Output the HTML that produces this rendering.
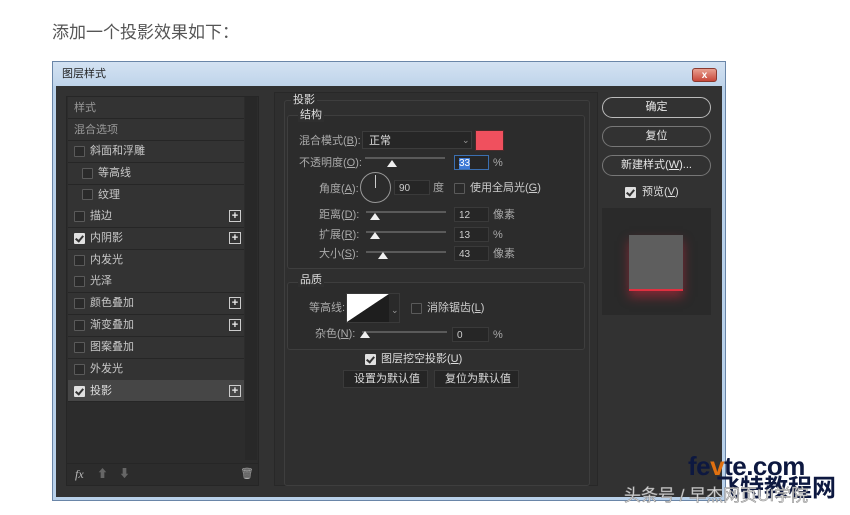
<!DOCTYPE html><html><head><meta charset="utf-8"><style>
body{margin:0;width:850px;height:515px;background:#fff;position:relative;overflow:hidden;font-family:"Liberation Sans","Noto Sans CJK SC",sans-serif;}
.a{position:absolute}
.t{position:absolute;font-size:11px;color:#c8c8c8;white-space:nowrap;line-height:13px}
.row{position:absolute;left:68px;width:176px;height:21px;border-bottom:1px solid #262626;background:#333}
.cb{position:absolute;width:9px;height:9px;border:1px solid #5a5a5a;background:#2a2a2a;border-radius:1px}
.cbk{background:#e0e0e0;border-color:#e0e0e0}
.cbk:after{content:"";position:absolute;left:2px;top:0px;width:3px;height:6px;border:solid #333;border-width:0 2px 2px 0;transform:rotate(40deg)}
.plus{position:absolute;left:229px;width:10px;height:10px;border:1px solid #ccc;color:#eee;font-size:11px;line-height:10px;text-align:center;font-weight:bold}
.sl{position:absolute;height:2px;background:#5a5a5a}
.th{position:absolute;width:0;height:0;border-left:5px solid transparent;border-right:5px solid transparent;border-bottom:7px solid #f0f0f0}
.in{position:absolute;height:15px;background:#262626;border:1px solid #3a3a3a;color:#ccc;font-size:10px;line-height:15px;padding-left:4px;box-sizing:border-box}
.btn{position:absolute;left:602px;width:109px;height:21px;border:1.5px solid #9a9a9a;border-radius:11px;box-sizing:border-box;color:#e8e8e8;font-size:11px;text-align:center;line-height:18px}
</style></head><body>
<div class="t" style="left:52px;top:23px;font-size:17px;color:#555;line-height:20px">添加一个投影效果如下：</div>
<div class="a" style="left:52px;top:61px;width:674px;height:440px;background:#b9d1ea;border:1px solid #6a86a8;box-sizing:border-box"></div>
<div class="a" style="left:53px;top:62px;width:672px;height:24px;background:linear-gradient(#d3e2f2,#bfd4ea)"></div>
<div class="t" style="left:62px;top:68px;color:#222;font-size:11px">图层样式</div>
<div class="a" style="left:692px;top:68px;width:25px;height:14px;background:linear-gradient(#e8a090,#c8483a);border:1px solid #8a3a30;border-radius:3px;color:#fff;font-size:10px;text-align:center;line-height:13px;font-weight:bold;box-sizing:border-box">x</div>
<div class="a" style="left:56px;top:86px;width:666px;height:411px;background:#323232"></div>
<div class="a" style="left:66px;top:96px;width:193px;height:390px;background:#2c2c2c;border:1px solid #262626;box-sizing:border-box"></div>
<div class="a" style="left:245px;top:97px;width:12px;height:363px;background:#282828"></div>
<div class="row" style="top:97px"></div><div class="t" style="left:74px;top:102px;color:#999">样式</div>
<div class="row" style="top:119px"></div><div class="t" style="left:74px;top:124px;color:#999">混合选项</div>
<div class="row" style="top:141px"></div><div class="cb" style="left:74px;top:146px"></div><div class="t" style="left:90px;top:145px">斜面和浮雕</div>
<div class="row" style="top:163px"></div><div class="cb" style="left:82px;top:168px"></div><div class="t" style="left:98px;top:167px">等高线</div>
<div class="row" style="top:185px"></div><div class="cb" style="left:82px;top:189px"></div><div class="t" style="left:98px;top:189px">纹理</div>
<div class="row" style="top:206px"></div><div class="cb" style="left:74px;top:211px"></div><div class="t" style="left:90px;top:210px">描边</div><div class="plus" style="top:210px">+</div>
<div class="row" style="top:228px"></div><div class="cb cbk" style="left:74px;top:233px"></div><div class="t" style="left:90px;top:232px">内阴影</div><div class="plus" style="top:232px">+</div>
<div class="row" style="top:250px"></div><div class="cb" style="left:74px;top:255px"></div><div class="t" style="left:90px;top:254px">内发光</div>
<div class="row" style="top:271px"></div><div class="cb" style="left:74px;top:276px"></div><div class="t" style="left:90px;top:275px">光泽</div>
<div class="row" style="top:293px"></div><div class="cb" style="left:74px;top:298px"></div><div class="t" style="left:90px;top:297px">颜色叠加</div><div class="plus" style="top:297px">+</div>
<div class="row" style="top:315px"></div><div class="cb" style="left:74px;top:320px"></div><div class="t" style="left:90px;top:319px">渐变叠加</div><div class="plus" style="top:319px">+</div>
<div class="row" style="top:337px"></div><div class="cb" style="left:74px;top:342px"></div><div class="t" style="left:90px;top:341px">图案叠加</div>
<div class="row" style="top:359px"></div><div class="cb" style="left:74px;top:364px"></div><div class="t" style="left:90px;top:363px">外发光</div>
<div class="row" style="top:380px;background:#464646"></div><div class="cb cbk" style="left:74px;top:386px"></div><div class="t" style="left:90px;top:385px;color:#ddd">投影</div><div class="plus" style="top:385px">+</div>
<div class="a" style="left:67px;top:463px;width:191px;height:1px;background:#262626"></div>
<div class="t" style="left:75px;top:468px;font-style:italic;font-family:'Liberation Serif',serif;font-size:12px;color:#bbb">fx</div>
<div class="t" style="left:97px;top:468px;color:#666">⬆</div><div class="t" style="left:119px;top:468px;color:#666">⬇</div>
<div class="t" style="left:240px;top:468px;color:#aaa">🗑</div>
<div class="a" style="left:274px;top:92px;width:324px;height:394px;background:#2f2f2f;border:1px solid #282828;box-sizing:border-box"></div>
<div class="a" style="left:284px;top:100px;width:306px;height:386px;border:1px solid #3e3e3e;border-radius:3px;box-sizing:border-box"></div>
<div class="t" style="left:291px;top:94px;background:#2f2f2f;padding:0 2px;color:#ddd">投影</div>
<div class="a" style="left:287px;top:115px;width:298px;height:154px;border:1px solid #3e3e3e;border-radius:3px;box-sizing:border-box;background:#2c2c2c"></div>
<div class="t" style="left:298px;top:109px;background:#2f2f2f;padding:0 2px;color:#ddd">结构</div>
<div class="t" style="left:299px;top:135px;color:#aaa">混合模式(<u>B</u>):</div>
<div class="a" style="left:362px;top:131px;width:110px;height:18px;background:#262626;border:1px solid #3c3c3c;box-sizing:border-box"></div>
<div class="t" style="left:369px;top:135px;color:#ddd">正常</div><div class="t" style="left:462px;top:134px;color:#999;font-size:9px">⌄</div>
<div class="a" style="left:475px;top:130px;width:29px;height:21px;background:#f0505e;border:1px solid #4a2a2a;box-sizing:border-box"></div>
<div class="t" style="left:299px;top:157px;color:#aaa">不透明度(<u>O</u>):</div>
<div class="sl" style="left:365px;top:157px;width:80px"></div><div class="th" style="left:387px;top:160px"></div>
<div class="in" style="left:454px;top:155px;width:35px;border-color:#3b6fb0"><span style="background:#3d7ad6;color:#fff">33</span></div><div class="t" style="left:493px;top:157px;color:#aaa">%</div>
<div class="t" style="left:319px;top:183px;color:#aaa">角度(<u>A</u>):</div>
<div class="a" style="left:360px;top:172px;width:29px;height:29px;border:1px solid #999;border-radius:50%"></div>
<div class="a" style="left:375px;top:175px;width:1px;height:13px;background:#ccc"></div>
<div class="in" style="left:394px;top:180px;width:36px">90</div><div class="t" style="left:433px;top:182px;color:#aaa">度</div>
<div class="cb" style="left:454px;top:183px"></div><div class="t" style="left:470px;top:182px;color:#ccc">使用全局光(<u>G</u>)</div>
<div class="t" style="left:319px;top:209px;color:#aaa">距离(<u>D</u>):</div>
<div class="sl" style="left:366px;top:211px;width:80px"></div><div class="th" style="left:370px;top:213px"></div>
<div class="in" style="left:454px;top:207px;width:35px">12</div><div class="t" style="left:493px;top:209px;color:#aaa">像素</div>
<div class="t" style="left:319px;top:229px;color:#aaa">扩展(<u>R</u>):</div>
<div class="sl" style="left:366px;top:231px;width:80px"></div><div class="th" style="left:370px;top:232px"></div>
<div class="in" style="left:454px;top:227px;width:35px">13</div><div class="t" style="left:493px;top:229px;color:#aaa">%</div>
<div class="t" style="left:319px;top:248px;color:#aaa">大小(<u>S</u>):</div>
<div class="sl" style="left:366px;top:251px;width:80px"></div><div class="th" style="left:378px;top:252px"></div>
<div class="in" style="left:454px;top:246px;width:35px">43</div><div class="t" style="left:493px;top:248px;color:#aaa">像素</div>
<div class="a" style="left:287px;top:282px;width:298px;height:68px;border:1px solid #3e3e3e;border-radius:3px;box-sizing:border-box;background:#2c2c2c"></div>
<div class="t" style="left:298px;top:274px;background:#2f2f2f;padding:0 2px;color:#ddd">品质</div>
<div class="t" style="left:309px;top:302px;color:#aaa">等高线:</div>
<div class="a" style="left:346px;top:293px;width:54px;height:30px;background:#2a2a2a;border:1px solid #3a3a3a;box-sizing:border-box"></div>
<svg class="a" style="left:347px;top:294px" width="42" height="28"><polygon points="0,0 42,0 0,28" fill="#fff"/><polygon points="42,0 42,28 0,28" fill="#1e1e1e"/></svg>
<div class="t" style="left:391px;top:304px;color:#999;font-size:9px">⌄</div>
<div class="cb" style="left:411px;top:303px"></div><div class="t" style="left:427px;top:302px;color:#ccc">消除锯齿(<u>L</u>)</div>
<div class="t" style="left:315px;top:328px;color:#aaa">杂色(<u>N</u>):</div>
<div class="sl" style="left:362px;top:331px;width:85px"></div><div class="th" style="left:360px;top:331px"></div>
<div class="in" style="left:452px;top:327px;width:37px">0</div><div class="t" style="left:493px;top:329px;color:#aaa">%</div>
<div class="cb cbk" style="left:365px;top:354px"></div><div class="t" style="left:381px;top:353px;color:#ddd">图层挖空投影(<u>U</u>)</div>
<div class="a" style="left:343px;top:370px;width:85px;height:18px;background:#252525;border:1px solid #3a3a3a;box-sizing:border-box"></div><div class="t" style="left:354px;top:373px;color:#ddd">设置为默认值</div>
<div class="a" style="left:434px;top:370px;width:85px;height:18px;background:#252525;border:1px solid #3a3a3a;box-sizing:border-box"></div><div class="t" style="left:445px;top:373px;color:#ddd">复位为默认值</div>
<div class="btn" style="top:97px;border-color:#bbb">确定</div>
<div class="btn" style="top:126px;border-color:#777">复位</div>
<div class="btn" style="top:155px;border-color:#777">新建样式(<u>W</u>)...</div>
<div class="cb cbk" style="left:625px;top:187px"></div><div class="t" style="left:642px;top:186px;color:#ddd">预览(<u>V</u>)</div>
<div class="a" style="left:602px;top:208px;width:109px;height:107px;background:#2a2a2a"></div>
<div class="a" style="left:629px;top:235px;width:54px;height:54px;background:#5e5e5e;border-bottom:2px solid #e03040;box-shadow:0 6px 10px rgba(200,40,60,.55)"></div>
<div class="t" style="left:688px;top:452px;font-size:26px;line-height:28px;font-weight:bold;color:#0d1840;letter-spacing:-0.5px">fe<span style="color:#e07010">v</span>te.com</div>
<div class="t" style="left:716px;top:476px;font-size:24px;line-height:26px;font-weight:bold;color:#0d1840">飞特教程网</div>
<div class="t" style="left:624px;top:486px;font-size:17px;line-height:20px;color:#ddd;-webkit-text-stroke:0.5px #888">头条号 / 早杰网页UI学院</div>
</body></html>
